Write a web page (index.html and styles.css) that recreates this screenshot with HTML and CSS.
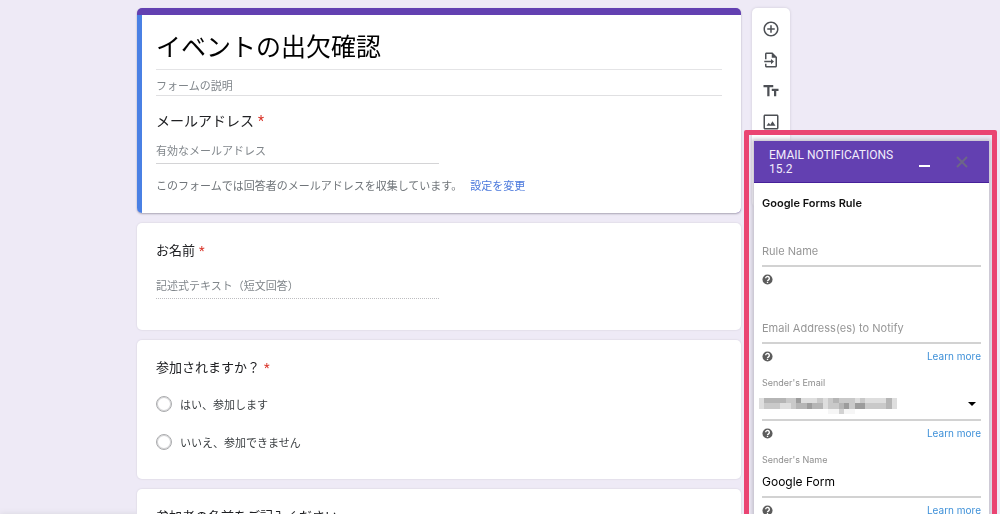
FILE: index.html
```html
<!DOCTYPE html>
<html lang="ja">
<head>
<meta charset="utf-8">
<title>イベントの出欠確認</title>
<link rel="stylesheet" href="styles.css">
</head>
<body>
<div class="page">
  <main class="form">
    <section class="card card-head">
      <div class="card-inner">
        <input class="title" type="text" value="イベントの出欠確認" aria-label="フォームのタイトル">
        <input class="desc" type="text" placeholder="フォームの説明" aria-label="フォームの説明">
        <label class="question question-email" for="email">メールアドレス<span class="req">*</span></label>
        <input class="answer" id="email" type="text" placeholder="有効なメールアドレス">
        <p class="info">このフォームでは回答者のメールアドレスを収集しています。<a class="change" href="#">設定を変更</a></p>
      </div>
    </section>
    <section class="card card-name">
      <label class="question" for="name">お名前<span class="req">*</span></label>
      <input class="answer answer-dotted" id="name" type="text" placeholder="記述式テキスト（短文回答）">
    </section>
    <section class="card card-choice">
      <h2 class="question">参加されますか？<span class="req">*</span></h2>
      <label class="option"><input class="radio" type="radio" name="join">はい、参加します</label>
      <label class="option"><input class="radio" type="radio" name="join">いいえ、参加できません</label>
    </section>
    <section class="card card-more">
      <h2 class="question">参加者の名前をご記入ください</h2>
    </section>
  </main>
  <nav class="tools">
    <button class="tool" aria-label="質問を追加"><svg viewBox="0 0 24 24"><path d="M13 7h-2v4H7v2h4v4h2v-4h4v-2h-4V7zm-1-5C6.48 2 2 6.48 2 12s4.48 10 10 10 10-4.48 10-10S17.52 2 12 2zm0 18c-4.41 0-8-3.59-8-8s3.59-8 8-8 8 3.59 8 8-3.59 8-8 8z"/></svg></button>
    <button class="tool" aria-label="質問をインポート"><svg viewBox="0 0 24 24"><path d="M14 2H6c-1.1 0-2 .9-2 2v7h2V4h7v5h5v11H6v-3H4v3c0 1.100.9 2 2 2h12c1.100 0 2-.9 2-2V8zM12 17.500l4-3.500-4-3.500V13H3v2h9z"/></svg></button>
    <button class="tool" aria-label="タイトルと説明を追加"><svg viewBox="0 0 24 24"><path d="M2 4v3h5v12h3V7h5V4H2zm20 5h-9v3h3v7h3v-7h3V9z"/></svg></button>
    <button class="tool" aria-label="画像を追加"><svg viewBox="0 0 24 24"><path d="M20 2H4c-1.100 0-2 .9-2 2v16c0 1.100.9 2 2 2h16c1.100 0 2-.9 2-2V4c0-1.100-.9-2-2-2zm0 18H4V4h16v16zM6 17l3-4 2 2.500 3-4.500 4 6z"/></svg></button>
  </nav>
</div>
<aside class="frame">
  <div class="panel">
    <header class="bar">
      <h1 class="bar-title">EMAIL NOTIFICATIONS 15.2</h1>
      <button class="bar-btn minimize" aria-label="Minimize"><svg viewBox="0 0 12 12"><path d="M0 9h11v2H0z"/></svg></button>
      <button class="bar-btn close" aria-label="Close"><svg viewBox="0 0 12 12"><path d="M1 1l10 10M11 1L1 11"/></svg></button>
    </header>
    <form class="rule">
      <h2 class="rule-title">Google Forms Rule</h2>
      <div class="field">
        <input class="control" type="text" placeholder="Rule Name" aria-label="Rule Name">
        <div class="help"><svg class="q" viewBox="0 0 24 24"><circle cx="12" cy="12" r="11"/><path d="M8 9.500a4 4 0 1 1 6.300 3.200c-1.500 1-2.300 1.500-2.300 2.800M12 17v2.500"/></svg></div>
      </div>
      <div class="field">
        <input class="control" type="text" placeholder="Email Address(es) to Notify" aria-label="Email Address(es) to Notify">
        <div class="help"><svg class="q" viewBox="0 0 24 24"><circle cx="12" cy="12" r="11"/><path d="M8 9.500a4 4 0 1 1 6.300 3.200c-1.500 1-2.300 1.500-2.300 2.800M12 17v2.500"/></svg><a class="learn" href="#">Learn more</a></div>
      </div>
      <div class="field">
        <label class="caption" for="sender-email">Sender's Email</label>
        <div class="select-wrap">
          <select class="control" id="sender-email"><option></option></select>
          <svg class="mosaic" viewBox="0 0 26 3" preserveAspectRatio="none" shape-rendering="crispEdges">
            <path fill="#c9c9c9" d="M0 0h26v2H0z"/>
            <path fill="#dedede" d="M0 0h1v2H0zM4 1h2v1H4zM8 0h3v1H8zM12 0h1v2h-1zM18 0h1v1h-1zM20 0h4v1h-4zM25 0h1v2h-1z"/>
            <path fill="#b5b5b5" d="M1 0h3v1H1zM4 0h1v1H4zM7 1h2v1H7zM10 1h2v1h-2zM14 0h1v1h-1zM15 1h2v1h-2zM24 0h1v2h-1z"/>
            <path fill="#9c9c9c" d="M7 0h1v1H7zM9 1h1v1H9zM16 1h1v1h-1zM18 1h2v1h-2z"/>
            <path fill="#f6f6f6" d="M13 2h5v1h-5z"/>
            <path fill="#d2d2d2" d="M15 2h1v1h-1z"/>
          </svg>
          <svg class="caret" viewBox="0 0 8 4"><path d="M0 0h8L4 4z"/></svg>
        </div>
        <div class="help"><svg class="q" viewBox="0 0 24 24"><circle cx="12" cy="12" r="11"/><path d="M8 9.500a4 4 0 1 1 6.300 3.200c-1.500 1-2.300 1.500-2.300 2.800M12 17v2.500"/></svg><a class="learn" href="#">Learn more</a></div>
      </div>
      <div class="field">
        <label class="caption" for="sender-name">Sender's Name</label>
        <input class="control" id="sender-name" type="text" value="Google Form">
        <div class="help"><svg class="q" viewBox="0 0 24 24"><circle cx="12" cy="12" r="11"/><path d="M8 9.500a4 4 0 1 1 6.300 3.200c-1.500 1-2.300 1.500-2.300 2.800M12 17v2.500"/></svg><a class="learn" href="#">Learn more</a></div>
      </div>
    </form>
  </div>
</aside>
<div class="status"></div>
</body>
</html>
```
FILE: styles.css
```css
* { box-sizing: border-box; }
body {
  margin: 0;
  height: 100vh;
  overflow: hidden;
  background: #eeeaf6;
  color: #202124;
  font-family: Roboto, "Noto Sans CJK JP", sans-serif;
}
input, select, button { font-family: inherit; margin: 0; padding: 0; border: 0; background: none; border-radius: 0; outline: 0; }
h1, h2, p { margin: 0; font-weight: 400; }
a { text-decoration: none; }

.page { display: flex; align-items: flex-start; gap: 11px; padding: 8px 210px 0 137px; }
.form { flex: 1; display: flex; flex-direction: column; gap: 10px; }
.card {
  display: flex;
  flex-direction: column;
  background: #fff;
  border-radius: 5px;
  box-shadow: 0 0 1px 1px #e4e0ec;
  padding: 18px 19px;
}
.card-head {
  padding: 7px 0 0;
  overflow: hidden;
  background: #6340b1;
  box-shadow: 0 1px 2px 0 #a9a5b4;
}
.card-inner {
  display: flex;
  flex-direction: column;
  background: #fff;
  border-left: 5px solid #4a80e4;
  padding: 10px 19px 17px 14px;
}
.title { height: 45px; padding-bottom: 4px; font-size: 25px; color: #000; border-bottom: 1px solid #e4e4e6; }
.desc { height: 26px; padding-top: 7px; font-size: 11px; border-bottom: 1px solid #e0e0e2; }
::placeholder { color: #80868b; opacity: 1; }
.question { font-size: 13px; line-height: 20px; }
.question-email { margin-top: 15px; font-size: 14px; }
.req { margin-left: 4px; color: #d93025; }
.answer { width: 50%; height: 26px; padding-top: 2px; font-size: 11px; border-bottom: 1px solid #d4d4d6; }
.card-head .answer { margin-top: 7px; }
.answer-dotted { border-bottom: 1px dotted #bdbdc0; }
.info { margin-top: 13px; font-size: 11px; line-height: 20px; color: #70757a; }
.card-inner { padding-bottom: 16px; }
.change { margin-left: 8px; color: #4a78dc; }

.card-name { padding-bottom: 31px; }
.card-name .answer { margin-top: 12px; }
.card-choice { padding-bottom: 18px; }
.option { display: flex; align-items: center; gap: 8px; height: 38px; font-size: 11px; color: #3c4043; }
.card-choice .question { margin-bottom: 7px; }
.radio { appearance: none; width: 16px; height: 16px; border: 1px solid #aaabad; border-radius: 50%; box-shadow: inset 0 0 0 1px #d4d4d6; }
.card-more { height: 130px; }

.tools {
  width: 38px;
  min-height: 199px;
  padding-top: 5px;
  display: flex;
  flex-direction: column;
  background: #fff;
  border-radius: 5px;
  box-shadow: 0 0 2px 1px #dedae6;
}
.tool { height: 31px; display: flex; align-items: center; justify-content: center; }
.tool svg { width: 18px; height: 18px; fill: #4d5055; }

.frame {
  position: fixed;
  top: 130px;
  right: 3px;
  bottom: -5px;
  width: 253px;
  padding: 6px 3px 0 5px;
  border: 5px solid #ea4472;
  border-radius: 2px;
  overflow: hidden;
  font-family: Inter, sans-serif;
}
.panel { min-height: 100%; background: #fff; box-shadow: 0 0 4px 2px #c4c1cd; }
.bar {
  display: flex;
  align-items: center;
  height: 42px;
  padding: 0 21px 0 15px;
  background: #6340b1;
  border-bottom: 1px solid #46209a;
}
.bar-title { flex: 1; font: 12px/14px Roboto, sans-serif; color: #f2edfb; }
.bar-btn { display: flex; }
.bar-btn svg { width: 12px; height: 12px; fill: #fff; }
.minimize { margin-right: 25px; }
.close svg { fill: none; stroke: #6d6688; stroke-width: 2; }
.rule { padding: 0 8px; }
.rule-title { font-size: 11px; line-height: 40px; font-weight: 600; color: #111; }
.field { display: flex; flex-direction: column; margin-bottom: 9px; }
.field > .control:first-child { margin-top: 12px; }
.caption { font-size: 9px; line-height: 12px; color: #8e8e8e; }
.control { width: 100%; height: 32px; font-size: 12px; color: #000; border-bottom: 2px solid #d2d2d2; appearance: none; }
.control::placeholder { font-size: 11px; color: #969696; }
.help { display: flex; align-items: center; justify-content: space-between; height: 24px; }
.q { width: 11px; height: 11px; fill: #5c5c5c; }
.q path { fill: none; stroke: #fff; stroke-width: 3; }
.learn { font-size: 10px; color: #3e90d8; }
.select-wrap { position: relative; display: flex; }
.mosaic { position: absolute; left: -3px; top: 9px; width: 138px; height: 16px; pointer-events: none; }
.caret { position: absolute; right: 5px; top: 13px; width: 8px; height: 4px; pointer-events: none; }
.status { position: fixed; left: 0; bottom: -8px; width: 360px; height: 8px; box-shadow: 0 0 6px 0 #d8d6de; z-index: -1; }
```
